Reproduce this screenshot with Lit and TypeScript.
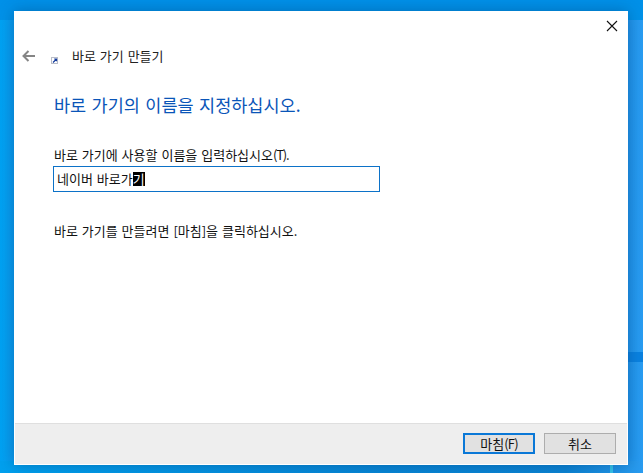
import { LitElement, html, css } from 'lit';
import { customElement } from 'lit/decorators.js';

const FONT = css`'Noto Sans CJK KR', 'Liberation Sans', sans-serif`;

@customElement('app-root')
export class AppRoot extends LitElement {
  static styles = css`
    :host {
      display: block;
      width: 643px;
      height: 473px;
      overflow: hidden;
      font-family: ${FONT};
      color: #111;
    }

    .desktop {
      position: relative;
      width: 643px;
      height: 473px;
      overflow: hidden;
      background: linear-gradient(90deg, #00a2f2 0, #0a9cf0 14px, #1f95ec 628px, #2a9df2 643px);
    }

    .top-band {
      position: absolute;
      left: 0;
      top: 0;
      width: 100%;
      height: 20px;
      background: linear-gradient(180deg, #0090e8, #0092e8);
    }

    .bottom-band {
      position: absolute;
      left: 0;
      bottom: 0;
      width: 100%;
      height: 12px;
      background: linear-gradient(90deg, #00a0ee, #0786d6 60%, #0b84d4 88%, #2a9cf0);
    }

    .right-band {
      position: absolute;
      left: 628px;
      top: 352px;
      width: 15px;
      height: 10px;
      background: #0a82e0;
    }

    .glint {
      position: absolute;
      left: 610px;
      bottom: 0;
      width: 3px;
      height: 9px;
      background: #35c4ea;
    }

    .window {
      position: absolute;
      left: 14px;
      top: 11px;
      width: 614px;
      height: 454px;
      box-sizing: border-box;
      display: flex;
      flex-direction: column;
      background: #fff;
      border: 1px solid #fff;
      box-shadow: 0 0 14px rgba(0, 40, 90, 0.35);
    }

    .close {
      align-self: flex-end;
      width: 12px;
      height: 12px;
      margin: 8px 9px 0 0;
      display: block;
    }

    .nav {
      display: flex;
      align-items: center;
      height: 24px;
      margin-top: 12px;
      padding-left: 7px;
    }

    .back {
      width: 14px;
      height: 12px;
      display: block;
    }

    .shortcut {
      width: 7px;
      height: 7px;
      margin: 8px 0 0 15px;
      display: block;
    }

    .nav-title {
      margin-left: 14px;
      font-size: 13px;
      line-height: 16px;
      word-spacing: 1px;
      color: #222;
    }

    .body {
      flex: 1;
      display: flex;
      flex-direction: column;
      padding: 0 0 0 38px;
    }

    .heading {
      margin: 27px 0 0;
      padding-left: 1px;
      font-size: 17.5px;
      font-weight: 400;
      line-height: 20px;
      word-spacing: 1.5px;
      color: #0a55b8;
    }

    .label {
      margin-top: 32px;
      padding-left: 1px;
      font-size: 13px;
      line-height: 16px;
      word-spacing: 1px;
    }

    .narrow {
      letter-spacing: -0.8px;
    }

    .label .narrow {
      letter-spacing: -1.2px;
    }

    .field {
      width: 327px;
      height: 26px;
      box-sizing: border-box;
      margin-top: 3px;
      padding: 0 3px;
      display: flex;
      align-items: center;
      border: 1px solid #0c72c8;
      font-size: 13px;
      line-height: 14px;
      word-spacing: 1px;
      white-space: pre;
    }

    .sel {
      background: #000;
      color: #fff;
    }

    .hint {
      margin-top: 31px;
      padding-left: 1px;
      font-size: 13px;
      line-height: 16px;
      word-spacing: 1px;
    }

    .footer {
      height: 41px;
      box-sizing: border-box;
      display: flex;
      justify-content: flex-end;
      align-items: flex-start;
      gap: 9px;
      padding: 9px 11px 0 0;
      background: #eeeeee;
      border-top: 1px solid #dfdfdf;
    }

    button {
      width: 72px;
      height: 21px;
      box-sizing: border-box;
      padding: 0;
      background: #e1e1e1;
      border: 1px solid #adadad;
      font: inherit;
      font-size: 13px;
      line-height: 16px;
      color: #111;
    }

    button.primary {
      border: 2px solid #0a78d7;
    }
  `;

  render() {
    return html`
      <div class="desktop">
        <div class="top-band"></div>
        <div class="bottom-band"></div>
        <div class="right-band"></div>
        <div class="glint"></div>
        <div class="window">
          <svg class="close" viewBox="0 0 12 12" aria-hidden="true">
            <path d="M1 1l10 10M11 1L1 11" stroke="#111" stroke-width="1.1" fill="none" />
          </svg>
          <div class="nav">
            <svg class="back" viewBox="0 0 14 12" aria-hidden="true">
              <path d="M13 6H2M6.5 1L1.5 6l5 5" stroke="#858585" stroke-width="2" fill="none" />
            </svg>
            <svg class="shortcut" viewBox="0 0 7 7" aria-hidden="true">
              <rect x="0" y="0" width="7" height="7" fill="#b9bdc8" />
              <rect x="1" y="1" width="5" height="5" fill="#fff" />
              <path d="M2 5.5L5 2.5M3.2 2H5.5V4.2" stroke="#123a9c" stroke-width="1.2" fill="none" />
            </svg>
            <span class="nav-title">바로 가기 만들기</span>
          </div>
          <div class="body">
            <h1 class="heading">바로 가기의 이름을 지정하십시오.</h1>
            <div class="label">바로 가기에 사용할 이름을 입력하십시오<span class="narrow">(T)</span>.</div>
            <div class="field"><span>네이버 바로가</span><span class="sel">기</span></div>
            <div class="hint">바로 가기를 만들려면 [마침]을 클릭하십시오.</div>
          </div>
          <div class="footer">
            <button class="primary">마침<span class="narrow">(F)</span></button>
            <button>취소</button>
          </div>
        </div>
      </div>
    `;
  }
}

declare global {
  interface HTMLElementTagNameMap {
    'app-root': AppRoot;
  }
}
